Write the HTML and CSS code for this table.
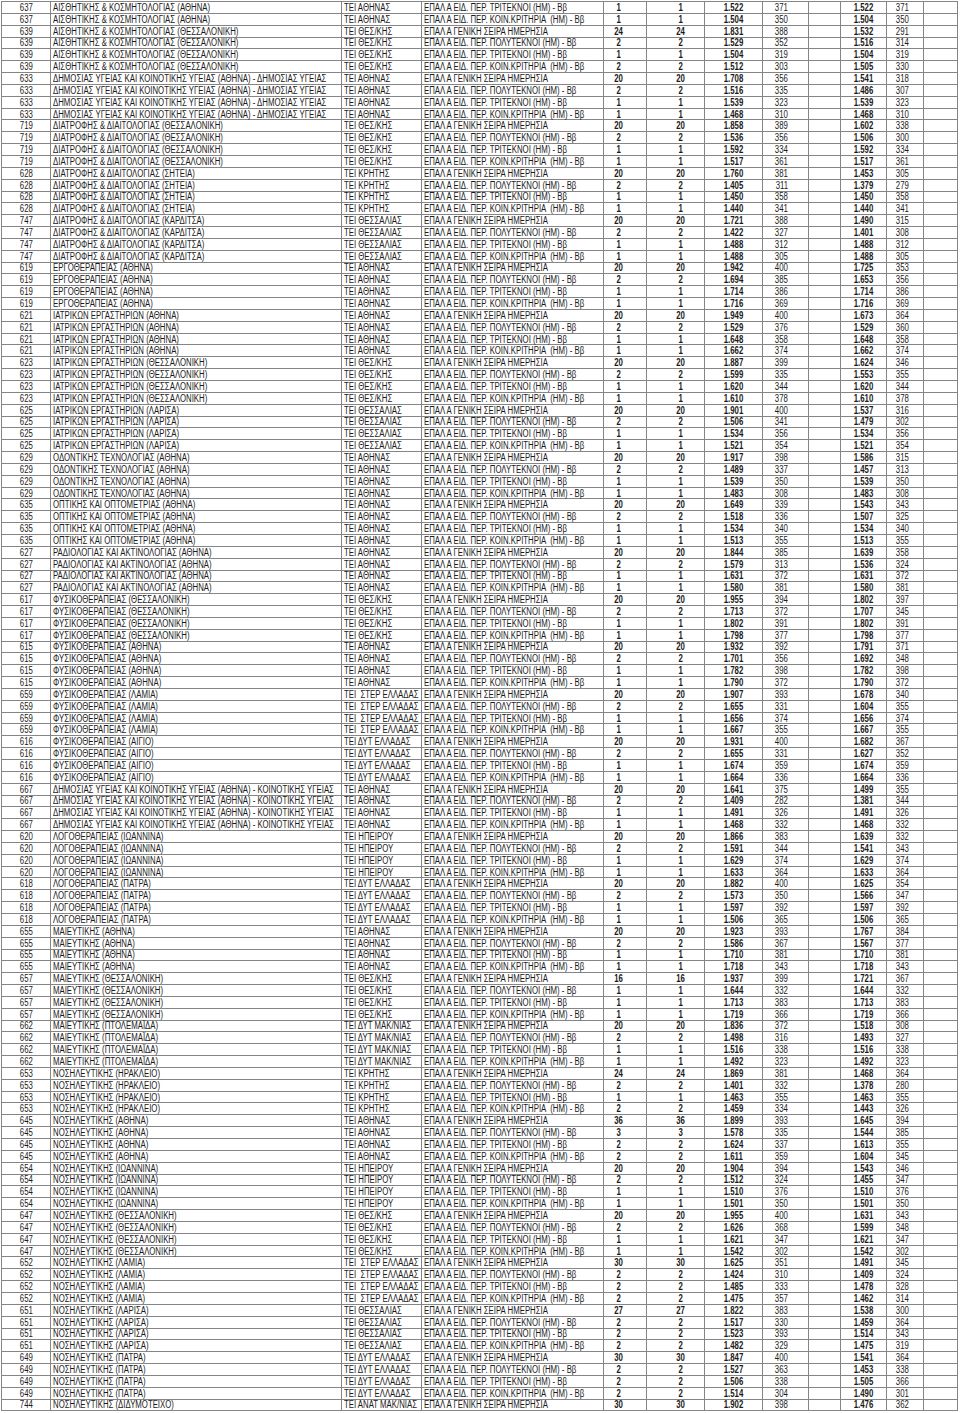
FILE: index.html
```html
<!DOCTYPE html>
<html lang="el">
<head>
<meta charset="utf-8">
<title>Βάσεις ΤΕΙ</title>
<link rel="stylesheet" href="styles.css">
</head>
<body>
<table class="sheet">
<colgroup><col class="w0"><col class="w1"><col class="w2"><col class="w3"><col class="w4"><col class="w5"><col class="w6"><col class="w7"><col class="w8"><col class="w9"><col class="w10"><col class="w11"></colgroup>
<tbody>
<tr><td><span>637</span></td><td><span>ΑΙΣΘΗΤΙΚΗΣ &amp; ΚΟΣΜΗΤΟΛΟΓΙΑΣ (ΑΘΗΝΑ)</span></td><td><span>ΤΕΙ ΑΘΗΝΑΣ</span></td><td><span>ΕΠΑΛ Α ΕΙΔ. ΠΕΡ. ΤΡΙΤΕΚΝΟΙ (ΗΜ) - Ββ</span></td><td><span>1</span></td><td><span>1</span></td><td><span>1.522</span></td><td><span>371</span></td><td></td><td><span>1.522</span></td><td><span>371</span></td><td></td></tr>
<tr><td><span>637</span></td><td><span>ΑΙΣΘΗΤΙΚΗΣ &amp; ΚΟΣΜΗΤΟΛΟΓΙΑΣ (ΑΘΗΝΑ)</span></td><td><span>ΤΕΙ ΑΘΗΝΑΣ</span></td><td><span>ΕΠΑΛ Α ΕΙΔ. ΠΕΡ. ΚΟΙΝ.ΚΡΙΤΗΡΙΑ  (ΗΜ) - Ββ</span></td><td><span>1</span></td><td><span>1</span></td><td><span>1.504</span></td><td><span>350</span></td><td></td><td><span>1.504</span></td><td><span>350</span></td><td></td></tr>
<tr><td><span>639</span></td><td><span>ΑΙΣΘΗΤΙΚΗΣ &amp; ΚΟΣΜΗΤΟΛΟΓΙΑΣ (ΘΕΣΣΑΛΟΝΙΚΗ)</span></td><td><span>ΤΕΙ ΘΕΣ/ΚΗΣ</span></td><td><span>ΕΠΑΛ Α ΓΕΝΙΚΗ ΣΕΙΡΑ ΗΜΕΡΗΣΙΑ</span></td><td><span>24</span></td><td><span>24</span></td><td><span>1.831</span></td><td><span>388</span></td><td></td><td><span>1.532</span></td><td><span>291</span></td><td></td></tr>
<tr><td><span>639</span></td><td><span>ΑΙΣΘΗΤΙΚΗΣ &amp; ΚΟΣΜΗΤΟΛΟΓΙΑΣ (ΘΕΣΣΑΛΟΝΙΚΗ)</span></td><td><span>ΤΕΙ ΘΕΣ/ΚΗΣ</span></td><td><span>ΕΠΑΛ Α ΕΙΔ. ΠΕΡ. ΠΟΛΥΤΕΚΝΟΙ (ΗΜ) - Ββ</span></td><td><span>2</span></td><td><span>2</span></td><td><span>1.529</span></td><td><span>352</span></td><td></td><td><span>1.516</span></td><td><span>314</span></td><td></td></tr>
<tr><td><span>639</span></td><td><span>ΑΙΣΘΗΤΙΚΗΣ &amp; ΚΟΣΜΗΤΟΛΟΓΙΑΣ (ΘΕΣΣΑΛΟΝΙΚΗ)</span></td><td><span>ΤΕΙ ΘΕΣ/ΚΗΣ</span></td><td><span>ΕΠΑΛ Α ΕΙΔ. ΠΕΡ. ΤΡΙΤΕΚΝΟΙ (ΗΜ) - Ββ</span></td><td><span>1</span></td><td><span>1</span></td><td><span>1.504</span></td><td><span>319</span></td><td></td><td><span>1.504</span></td><td><span>319</span></td><td></td></tr>
<tr><td><span>639</span></td><td><span>ΑΙΣΘΗΤΙΚΗΣ &amp; ΚΟΣΜΗΤΟΛΟΓΙΑΣ (ΘΕΣΣΑΛΟΝΙΚΗ)</span></td><td><span>ΤΕΙ ΘΕΣ/ΚΗΣ</span></td><td><span>ΕΠΑΛ Α ΕΙΔ. ΠΕΡ. ΚΟΙΝ.ΚΡΙΤΗΡΙΑ  (ΗΜ) - Ββ</span></td><td><span>2</span></td><td><span>2</span></td><td><span>1.512</span></td><td><span>303</span></td><td></td><td><span>1.505</span></td><td><span>330</span></td><td></td></tr>
<tr><td><span>633</span></td><td><span>ΔΗΜΟΣΙΑΣ ΥΓΕΙΑΣ ΚΑΙ ΚΟΙΝΟΤΙΚΗΣ ΥΓΕΙΑΣ (ΑΘΗΝΑ) - ΔΗΜΟΣΙΑΣ ΥΓΕΙΑΣ</span></td><td><span>ΤΕΙ ΑΘΗΝΑΣ</span></td><td><span>ΕΠΑΛ Α ΓΕΝΙΚΗ ΣΕΙΡΑ ΗΜΕΡΗΣΙΑ</span></td><td><span>20</span></td><td><span>20</span></td><td><span>1.708</span></td><td><span>356</span></td><td></td><td><span>1.541</span></td><td><span>318</span></td><td></td></tr>
<tr><td><span>633</span></td><td><span>ΔΗΜΟΣΙΑΣ ΥΓΕΙΑΣ ΚΑΙ ΚΟΙΝΟΤΙΚΗΣ ΥΓΕΙΑΣ (ΑΘΗΝΑ) - ΔΗΜΟΣΙΑΣ ΥΓΕΙΑΣ</span></td><td><span>ΤΕΙ ΑΘΗΝΑΣ</span></td><td><span>ΕΠΑΛ Α ΕΙΔ. ΠΕΡ. ΠΟΛΥΤΕΚΝΟΙ (ΗΜ) - Ββ</span></td><td><span>2</span></td><td><span>2</span></td><td><span>1.516</span></td><td><span>335</span></td><td></td><td><span>1.486</span></td><td><span>307</span></td><td></td></tr>
<tr><td><span>633</span></td><td><span>ΔΗΜΟΣΙΑΣ ΥΓΕΙΑΣ ΚΑΙ ΚΟΙΝΟΤΙΚΗΣ ΥΓΕΙΑΣ (ΑΘΗΝΑ) - ΔΗΜΟΣΙΑΣ ΥΓΕΙΑΣ</span></td><td><span>ΤΕΙ ΑΘΗΝΑΣ</span></td><td><span>ΕΠΑΛ Α ΕΙΔ. ΠΕΡ. ΤΡΙΤΕΚΝΟΙ (ΗΜ) - Ββ</span></td><td><span>1</span></td><td><span>1</span></td><td><span>1.539</span></td><td><span>323</span></td><td></td><td><span>1.539</span></td><td><span>323</span></td><td></td></tr>
<tr><td><span>633</span></td><td><span>ΔΗΜΟΣΙΑΣ ΥΓΕΙΑΣ ΚΑΙ ΚΟΙΝΟΤΙΚΗΣ ΥΓΕΙΑΣ (ΑΘΗΝΑ) - ΔΗΜΟΣΙΑΣ ΥΓΕΙΑΣ</span></td><td><span>ΤΕΙ ΑΘΗΝΑΣ</span></td><td><span>ΕΠΑΛ Α ΕΙΔ. ΠΕΡ. ΚΟΙΝ.ΚΡΙΤΗΡΙΑ  (ΗΜ) - Ββ</span></td><td><span>1</span></td><td><span>1</span></td><td><span>1.468</span></td><td><span>310</span></td><td></td><td><span>1.468</span></td><td><span>310</span></td><td></td></tr>
<tr><td><span>719</span></td><td><span>ΔΙΑΤΡΟΦΗΣ &amp; ΔΙΑΙΤΟΛΟΓΙΑΣ (ΘΕΣΣΑΛΟΝΙΚΗ)</span></td><td><span>ΤΕΙ ΘΕΣ/ΚΗΣ</span></td><td><span>ΕΠΑΛ Α ΓΕΝΙΚΗ ΣΕΙΡΑ ΗΜΕΡΗΣΙΑ</span></td><td><span>20</span></td><td><span>20</span></td><td><span>1.858</span></td><td><span>389</span></td><td></td><td><span>1.602</span></td><td><span>338</span></td><td></td></tr>
<tr><td><span>719</span></td><td><span>ΔΙΑΤΡΟΦΗΣ &amp; ΔΙΑΙΤΟΛΟΓΙΑΣ (ΘΕΣΣΑΛΟΝΙΚΗ)</span></td><td><span>ΤΕΙ ΘΕΣ/ΚΗΣ</span></td><td><span>ΕΠΑΛ Α ΕΙΔ. ΠΕΡ. ΠΟΛΥΤΕΚΝΟΙ (ΗΜ) - Ββ</span></td><td><span>2</span></td><td><span>2</span></td><td><span>1.536</span></td><td><span>356</span></td><td></td><td><span>1.506</span></td><td><span>300</span></td><td></td></tr>
<tr><td><span>719</span></td><td><span>ΔΙΑΤΡΟΦΗΣ &amp; ΔΙΑΙΤΟΛΟΓΙΑΣ (ΘΕΣΣΑΛΟΝΙΚΗ)</span></td><td><span>ΤΕΙ ΘΕΣ/ΚΗΣ</span></td><td><span>ΕΠΑΛ Α ΕΙΔ. ΠΕΡ. ΤΡΙΤΕΚΝΟΙ (ΗΜ) - Ββ</span></td><td><span>1</span></td><td><span>1</span></td><td><span>1.592</span></td><td><span>334</span></td><td></td><td><span>1.592</span></td><td><span>334</span></td><td></td></tr>
<tr><td><span>719</span></td><td><span>ΔΙΑΤΡΟΦΗΣ &amp; ΔΙΑΙΤΟΛΟΓΙΑΣ (ΘΕΣΣΑΛΟΝΙΚΗ)</span></td><td><span>ΤΕΙ ΘΕΣ/ΚΗΣ</span></td><td><span>ΕΠΑΛ Α ΕΙΔ. ΠΕΡ. ΚΟΙΝ.ΚΡΙΤΗΡΙΑ  (ΗΜ) - Ββ</span></td><td><span>1</span></td><td><span>1</span></td><td><span>1.517</span></td><td><span>361</span></td><td></td><td><span>1.517</span></td><td><span>361</span></td><td></td></tr>
<tr><td><span>628</span></td><td><span>ΔΙΑΤΡΟΦΗΣ &amp; ΔΙΑΙΤΟΛΟΓΙΑΣ (ΣΗΤΕΙΑ)</span></td><td><span>ΤΕΙ ΚΡΗΤΗΣ</span></td><td><span>ΕΠΑΛ Α ΓΕΝΙΚΗ ΣΕΙΡΑ ΗΜΕΡΗΣΙΑ</span></td><td><span>20</span></td><td><span>20</span></td><td><span>1.760</span></td><td><span>381</span></td><td></td><td><span>1.453</span></td><td><span>305</span></td><td></td></tr>
<tr><td><span>628</span></td><td><span>ΔΙΑΤΡΟΦΗΣ &amp; ΔΙΑΙΤΟΛΟΓΙΑΣ (ΣΗΤΕΙΑ)</span></td><td><span>ΤΕΙ ΚΡΗΤΗΣ</span></td><td><span>ΕΠΑΛ Α ΕΙΔ. ΠΕΡ. ΠΟΛΥΤΕΚΝΟΙ (ΗΜ) - Ββ</span></td><td><span>2</span></td><td><span>2</span></td><td><span>1.405</span></td><td><span>311</span></td><td></td><td><span>1.379</span></td><td><span>279</span></td><td></td></tr>
<tr><td><span>628</span></td><td><span>ΔΙΑΤΡΟΦΗΣ &amp; ΔΙΑΙΤΟΛΟΓΙΑΣ (ΣΗΤΕΙΑ)</span></td><td><span>ΤΕΙ ΚΡΗΤΗΣ</span></td><td><span>ΕΠΑΛ Α ΕΙΔ. ΠΕΡ. ΤΡΙΤΕΚΝΟΙ (ΗΜ) - Ββ</span></td><td><span>1</span></td><td><span>1</span></td><td><span>1.450</span></td><td><span>358</span></td><td></td><td><span>1.450</span></td><td><span>358</span></td><td></td></tr>
<tr><td><span>628</span></td><td><span>ΔΙΑΤΡΟΦΗΣ &amp; ΔΙΑΙΤΟΛΟΓΙΑΣ (ΣΗΤΕΙΑ)</span></td><td><span>ΤΕΙ ΚΡΗΤΗΣ</span></td><td><span>ΕΠΑΛ Α ΕΙΔ. ΠΕΡ. ΚΟΙΝ.ΚΡΙΤΗΡΙΑ  (ΗΜ) - Ββ</span></td><td><span>1</span></td><td><span>1</span></td><td><span>1.440</span></td><td><span>341</span></td><td></td><td><span>1.440</span></td><td><span>341</span></td><td></td></tr>
<tr><td><span>747</span></td><td><span>ΔΙΑΤΡΟΦΗΣ &amp; ΔΙΑΙΤΟΛΟΓΙΑΣ (ΚΑΡΔΙΤΣΑ)</span></td><td><span>ΤΕΙ ΘΕΣΣΑΛΙΑΣ</span></td><td><span>ΕΠΑΛ Α ΓΕΝΙΚΗ ΣΕΙΡΑ ΗΜΕΡΗΣΙΑ</span></td><td><span>20</span></td><td><span>20</span></td><td><span>1.721</span></td><td><span>388</span></td><td></td><td><span>1.490</span></td><td><span>315</span></td><td></td></tr>
<tr><td><span>747</span></td><td><span>ΔΙΑΤΡΟΦΗΣ &amp; ΔΙΑΙΤΟΛΟΓΙΑΣ (ΚΑΡΔΙΤΣΑ)</span></td><td><span>ΤΕΙ ΘΕΣΣΑΛΙΑΣ</span></td><td><span>ΕΠΑΛ Α ΕΙΔ. ΠΕΡ. ΠΟΛΥΤΕΚΝΟΙ (ΗΜ) - Ββ</span></td><td><span>2</span></td><td><span>2</span></td><td><span>1.422</span></td><td><span>327</span></td><td></td><td><span>1.401</span></td><td><span>308</span></td><td></td></tr>
<tr><td><span>747</span></td><td><span>ΔΙΑΤΡΟΦΗΣ &amp; ΔΙΑΙΤΟΛΟΓΙΑΣ (ΚΑΡΔΙΤΣΑ)</span></td><td><span>ΤΕΙ ΘΕΣΣΑΛΙΑΣ</span></td><td><span>ΕΠΑΛ Α ΕΙΔ. ΠΕΡ. ΤΡΙΤΕΚΝΟΙ (ΗΜ) - Ββ</span></td><td><span>1</span></td><td><span>1</span></td><td><span>1.488</span></td><td><span>312</span></td><td></td><td><span>1.488</span></td><td><span>312</span></td><td></td></tr>
<tr><td><span>747</span></td><td><span>ΔΙΑΤΡΟΦΗΣ &amp; ΔΙΑΙΤΟΛΟΓΙΑΣ (ΚΑΡΔΙΤΣΑ)</span></td><td><span>ΤΕΙ ΘΕΣΣΑΛΙΑΣ</span></td><td><span>ΕΠΑΛ Α ΕΙΔ. ΠΕΡ. ΚΟΙΝ.ΚΡΙΤΗΡΙΑ  (ΗΜ) - Ββ</span></td><td><span>1</span></td><td><span>1</span></td><td><span>1.488</span></td><td><span>305</span></td><td></td><td><span>1.488</span></td><td><span>305</span></td><td></td></tr>
<tr><td><span>619</span></td><td><span>ΕΡΓΟΘΕΡΑΠΕΙΑΣ (ΑΘΗΝΑ)</span></td><td><span>ΤΕΙ ΑΘΗΝΑΣ</span></td><td><span>ΕΠΑΛ Α ΓΕΝΙΚΗ ΣΕΙΡΑ ΗΜΕΡΗΣΙΑ</span></td><td><span>20</span></td><td><span>20</span></td><td><span>1.942</span></td><td><span>400</span></td><td></td><td><span>1.725</span></td><td><span>353</span></td><td></td></tr>
<tr><td><span>619</span></td><td><span>ΕΡΓΟΘΕΡΑΠΕΙΑΣ (ΑΘΗΝΑ)</span></td><td><span>ΤΕΙ ΑΘΗΝΑΣ</span></td><td><span>ΕΠΑΛ Α ΕΙΔ. ΠΕΡ. ΠΟΛΥΤΕΚΝΟΙ (ΗΜ) - Ββ</span></td><td><span>2</span></td><td><span>2</span></td><td><span>1.694</span></td><td><span>385</span></td><td></td><td><span>1.653</span></td><td><span>356</span></td><td></td></tr>
<tr><td><span>619</span></td><td><span>ΕΡΓΟΘΕΡΑΠΕΙΑΣ (ΑΘΗΝΑ)</span></td><td><span>ΤΕΙ ΑΘΗΝΑΣ</span></td><td><span>ΕΠΑΛ Α ΕΙΔ. ΠΕΡ. ΤΡΙΤΕΚΝΟΙ (ΗΜ) - Ββ</span></td><td><span>1</span></td><td><span>1</span></td><td><span>1.714</span></td><td><span>386</span></td><td></td><td><span>1.714</span></td><td><span>386</span></td><td></td></tr>
<tr><td><span>619</span></td><td><span>ΕΡΓΟΘΕΡΑΠΕΙΑΣ (ΑΘΗΝΑ)</span></td><td><span>ΤΕΙ ΑΘΗΝΑΣ</span></td><td><span>ΕΠΑΛ Α ΕΙΔ. ΠΕΡ. ΚΟΙΝ.ΚΡΙΤΗΡΙΑ  (ΗΜ) - Ββ</span></td><td><span>1</span></td><td><span>1</span></td><td><span>1.716</span></td><td><span>369</span></td><td></td><td><span>1.716</span></td><td><span>369</span></td><td></td></tr>
<tr><td><span>621</span></td><td><span>ΙΑΤΡΙΚΩΝ ΕΡΓΑΣΤΗΡΙΩΝ (ΑΘΗΝΑ)</span></td><td><span>ΤΕΙ ΑΘΗΝΑΣ</span></td><td><span>ΕΠΑΛ Α ΓΕΝΙΚΗ ΣΕΙΡΑ ΗΜΕΡΗΣΙΑ</span></td><td><span>20</span></td><td><span>20</span></td><td><span>1.949</span></td><td><span>400</span></td><td></td><td><span>1.673</span></td><td><span>364</span></td><td></td></tr>
<tr><td><span>621</span></td><td><span>ΙΑΤΡΙΚΩΝ ΕΡΓΑΣΤΗΡΙΩΝ (ΑΘΗΝΑ)</span></td><td><span>ΤΕΙ ΑΘΗΝΑΣ</span></td><td><span>ΕΠΑΛ Α ΕΙΔ. ΠΕΡ. ΠΟΛΥΤΕΚΝΟΙ (ΗΜ) - Ββ</span></td><td><span>2</span></td><td><span>2</span></td><td><span>1.529</span></td><td><span>376</span></td><td></td><td><span>1.529</span></td><td><span>360</span></td><td></td></tr>
<tr><td><span>621</span></td><td><span>ΙΑΤΡΙΚΩΝ ΕΡΓΑΣΤΗΡΙΩΝ (ΑΘΗΝΑ)</span></td><td><span>ΤΕΙ ΑΘΗΝΑΣ</span></td><td><span>ΕΠΑΛ Α ΕΙΔ. ΠΕΡ. ΤΡΙΤΕΚΝΟΙ (ΗΜ) - Ββ</span></td><td><span>1</span></td><td><span>1</span></td><td><span>1.648</span></td><td><span>358</span></td><td></td><td><span>1.648</span></td><td><span>358</span></td><td></td></tr>
<tr><td><span>621</span></td><td><span>ΙΑΤΡΙΚΩΝ ΕΡΓΑΣΤΗΡΙΩΝ (ΑΘΗΝΑ)</span></td><td><span>ΤΕΙ ΑΘΗΝΑΣ</span></td><td><span>ΕΠΑΛ Α ΕΙΔ. ΠΕΡ. ΚΟΙΝ.ΚΡΙΤΗΡΙΑ  (ΗΜ) - Ββ</span></td><td><span>1</span></td><td><span>1</span></td><td><span>1.662</span></td><td><span>374</span></td><td></td><td><span>1.662</span></td><td><span>374</span></td><td></td></tr>
<tr><td><span>623</span></td><td><span>ΙΑΤΡΙΚΩΝ ΕΡΓΑΣΤΗΡΙΩΝ (ΘΕΣΣΑΛΟΝΙΚΗ)</span></td><td><span>ΤΕΙ ΘΕΣ/ΚΗΣ</span></td><td><span>ΕΠΑΛ Α ΓΕΝΙΚΗ ΣΕΙΡΑ ΗΜΕΡΗΣΙΑ</span></td><td><span>20</span></td><td><span>20</span></td><td><span>1.887</span></td><td><span>399</span></td><td></td><td><span>1.624</span></td><td><span>346</span></td><td></td></tr>
<tr><td><span>623</span></td><td><span>ΙΑΤΡΙΚΩΝ ΕΡΓΑΣΤΗΡΙΩΝ (ΘΕΣΣΑΛΟΝΙΚΗ)</span></td><td><span>ΤΕΙ ΘΕΣ/ΚΗΣ</span></td><td><span>ΕΠΑΛ Α ΕΙΔ. ΠΕΡ. ΠΟΛΥΤΕΚΝΟΙ (ΗΜ) - Ββ</span></td><td><span>2</span></td><td><span>2</span></td><td><span>1.599</span></td><td><span>335</span></td><td></td><td><span>1.553</span></td><td><span>355</span></td><td></td></tr>
<tr><td><span>623</span></td><td><span>ΙΑΤΡΙΚΩΝ ΕΡΓΑΣΤΗΡΙΩΝ (ΘΕΣΣΑΛΟΝΙΚΗ)</span></td><td><span>ΤΕΙ ΘΕΣ/ΚΗΣ</span></td><td><span>ΕΠΑΛ Α ΕΙΔ. ΠΕΡ. ΤΡΙΤΕΚΝΟΙ (ΗΜ) - Ββ</span></td><td><span>1</span></td><td><span>1</span></td><td><span>1.620</span></td><td><span>344</span></td><td></td><td><span>1.620</span></td><td><span>344</span></td><td></td></tr>
<tr><td><span>623</span></td><td><span>ΙΑΤΡΙΚΩΝ ΕΡΓΑΣΤΗΡΙΩΝ (ΘΕΣΣΑΛΟΝΙΚΗ)</span></td><td><span>ΤΕΙ ΘΕΣ/ΚΗΣ</span></td><td><span>ΕΠΑΛ Α ΕΙΔ. ΠΕΡ. ΚΟΙΝ.ΚΡΙΤΗΡΙΑ  (ΗΜ) - Ββ</span></td><td><span>1</span></td><td><span>1</span></td><td><span>1.610</span></td><td><span>378</span></td><td></td><td><span>1.610</span></td><td><span>378</span></td><td></td></tr>
<tr><td><span>625</span></td><td><span>ΙΑΤΡΙΚΩΝ ΕΡΓΑΣΤΗΡΙΩΝ (ΛΑΡΙΣΑ)</span></td><td><span>ΤΕΙ ΘΕΣΣΑΛΙΑΣ</span></td><td><span>ΕΠΑΛ Α ΓΕΝΙΚΗ ΣΕΙΡΑ ΗΜΕΡΗΣΙΑ</span></td><td><span>20</span></td><td><span>20</span></td><td><span>1.901</span></td><td><span>400</span></td><td></td><td><span>1.537</span></td><td><span>316</span></td><td></td></tr>
<tr><td><span>625</span></td><td><span>ΙΑΤΡΙΚΩΝ ΕΡΓΑΣΤΗΡΙΩΝ (ΛΑΡΙΣΑ)</span></td><td><span>ΤΕΙ ΘΕΣΣΑΛΙΑΣ</span></td><td><span>ΕΠΑΛ Α ΕΙΔ. ΠΕΡ. ΠΟΛΥΤΕΚΝΟΙ (ΗΜ) - Ββ</span></td><td><span>2</span></td><td><span>2</span></td><td><span>1.506</span></td><td><span>341</span></td><td></td><td><span>1.479</span></td><td><span>302</span></td><td></td></tr>
<tr><td><span>625</span></td><td><span>ΙΑΤΡΙΚΩΝ ΕΡΓΑΣΤΗΡΙΩΝ (ΛΑΡΙΣΑ)</span></td><td><span>ΤΕΙ ΘΕΣΣΑΛΙΑΣ</span></td><td><span>ΕΠΑΛ Α ΕΙΔ. ΠΕΡ. ΤΡΙΤΕΚΝΟΙ (ΗΜ) - Ββ</span></td><td><span>1</span></td><td><span>1</span></td><td><span>1.534</span></td><td><span>356</span></td><td></td><td><span>1.534</span></td><td><span>356</span></td><td></td></tr>
<tr><td><span>625</span></td><td><span>ΙΑΤΡΙΚΩΝ ΕΡΓΑΣΤΗΡΙΩΝ (ΛΑΡΙΣΑ)</span></td><td><span>ΤΕΙ ΘΕΣΣΑΛΙΑΣ</span></td><td><span>ΕΠΑΛ Α ΕΙΔ. ΠΕΡ. ΚΟΙΝ.ΚΡΙΤΗΡΙΑ  (ΗΜ) - Ββ</span></td><td><span>1</span></td><td><span>1</span></td><td><span>1.521</span></td><td><span>354</span></td><td></td><td><span>1.521</span></td><td><span>354</span></td><td></td></tr>
<tr><td><span>629</span></td><td><span>ΟΔΟΝΤΙΚΗΣ ΤΕΧΝΟΛΟΓΙΑΣ (ΑΘΗΝΑ)</span></td><td><span>ΤΕΙ ΑΘΗΝΑΣ</span></td><td><span>ΕΠΑΛ Α ΓΕΝΙΚΗ ΣΕΙΡΑ ΗΜΕΡΗΣΙΑ</span></td><td><span>20</span></td><td><span>20</span></td><td><span>1.917</span></td><td><span>398</span></td><td></td><td><span>1.586</span></td><td><span>315</span></td><td></td></tr>
<tr><td><span>629</span></td><td><span>ΟΔΟΝΤΙΚΗΣ ΤΕΧΝΟΛΟΓΙΑΣ (ΑΘΗΝΑ)</span></td><td><span>ΤΕΙ ΑΘΗΝΑΣ</span></td><td><span>ΕΠΑΛ Α ΕΙΔ. ΠΕΡ. ΠΟΛΥΤΕΚΝΟΙ (ΗΜ) - Ββ</span></td><td><span>2</span></td><td><span>2</span></td><td><span>1.489</span></td><td><span>337</span></td><td></td><td><span>1.457</span></td><td><span>313</span></td><td></td></tr>
<tr><td><span>629</span></td><td><span>ΟΔΟΝΤΙΚΗΣ ΤΕΧΝΟΛΟΓΙΑΣ (ΑΘΗΝΑ)</span></td><td><span>ΤΕΙ ΑΘΗΝΑΣ</span></td><td><span>ΕΠΑΛ Α ΕΙΔ. ΠΕΡ. ΤΡΙΤΕΚΝΟΙ (ΗΜ) - Ββ</span></td><td><span>1</span></td><td><span>1</span></td><td><span>1.539</span></td><td><span>350</span></td><td></td><td><span>1.539</span></td><td><span>350</span></td><td></td></tr>
<tr><td><span>629</span></td><td><span>ΟΔΟΝΤΙΚΗΣ ΤΕΧΝΟΛΟΓΙΑΣ (ΑΘΗΝΑ)</span></td><td><span>ΤΕΙ ΑΘΗΝΑΣ</span></td><td><span>ΕΠΑΛ Α ΕΙΔ. ΠΕΡ. ΚΟΙΝ.ΚΡΙΤΗΡΙΑ  (ΗΜ) - Ββ</span></td><td><span>1</span></td><td><span>1</span></td><td><span>1.483</span></td><td><span>308</span></td><td></td><td><span>1.483</span></td><td><span>308</span></td><td></td></tr>
<tr><td><span>635</span></td><td><span>ΟΠΤΙΚΗΣ ΚΑΙ ΟΠΤΟΜΕΤΡΙΑΣ (ΑΘΗΝΑ)</span></td><td><span>ΤΕΙ ΑΘΗΝΑΣ</span></td><td><span>ΕΠΑΛ Α ΓΕΝΙΚΗ ΣΕΙΡΑ ΗΜΕΡΗΣΙΑ</span></td><td><span>20</span></td><td><span>20</span></td><td><span>1.649</span></td><td><span>339</span></td><td></td><td><span>1.543</span></td><td><span>343</span></td><td></td></tr>
<tr><td><span>635</span></td><td><span>ΟΠΤΙΚΗΣ ΚΑΙ ΟΠΤΟΜΕΤΡΙΑΣ (ΑΘΗΝΑ)</span></td><td><span>ΤΕΙ ΑΘΗΝΑΣ</span></td><td><span>ΕΠΑΛ Α ΕΙΔ. ΠΕΡ. ΠΟΛΥΤΕΚΝΟΙ (ΗΜ) - Ββ</span></td><td><span>2</span></td><td><span>2</span></td><td><span>1.518</span></td><td><span>336</span></td><td></td><td><span>1.507</span></td><td><span>325</span></td><td></td></tr>
<tr><td><span>635</span></td><td><span>ΟΠΤΙΚΗΣ ΚΑΙ ΟΠΤΟΜΕΤΡΙΑΣ (ΑΘΗΝΑ)</span></td><td><span>ΤΕΙ ΑΘΗΝΑΣ</span></td><td><span>ΕΠΑΛ Α ΕΙΔ. ΠΕΡ. ΤΡΙΤΕΚΝΟΙ (ΗΜ) - Ββ</span></td><td><span>1</span></td><td><span>1</span></td><td><span>1.534</span></td><td><span>340</span></td><td></td><td><span>1.534</span></td><td><span>340</span></td><td></td></tr>
<tr><td><span>635</span></td><td><span>ΟΠΤΙΚΗΣ ΚΑΙ ΟΠΤΟΜΕΤΡΙΑΣ (ΑΘΗΝΑ)</span></td><td><span>ΤΕΙ ΑΘΗΝΑΣ</span></td><td><span>ΕΠΑΛ Α ΕΙΔ. ΠΕΡ. ΚΟΙΝ.ΚΡΙΤΗΡΙΑ  (ΗΜ) - Ββ</span></td><td><span>1</span></td><td><span>1</span></td><td><span>1.513</span></td><td><span>355</span></td><td></td><td><span>1.513</span></td><td><span>355</span></td><td></td></tr>
<tr><td><span>627</span></td><td><span>ΡΑΔΙΟΛΟΓΙΑΣ ΚΑΙ ΑΚΤΙΝΟΛΟΓΙΑΣ (ΑΘΗΝΑ)</span></td><td><span>ΤΕΙ ΑΘΗΝΑΣ</span></td><td><span>ΕΠΑΛ Α ΓΕΝΙΚΗ ΣΕΙΡΑ ΗΜΕΡΗΣΙΑ</span></td><td><span>20</span></td><td><span>20</span></td><td><span>1.844</span></td><td><span>385</span></td><td></td><td><span>1.639</span></td><td><span>358</span></td><td></td></tr>
<tr><td><span>627</span></td><td><span>ΡΑΔΙΟΛΟΓΙΑΣ ΚΑΙ ΑΚΤΙΝΟΛΟΓΙΑΣ (ΑΘΗΝΑ)</span></td><td><span>ΤΕΙ ΑΘΗΝΑΣ</span></td><td><span>ΕΠΑΛ Α ΕΙΔ. ΠΕΡ. ΠΟΛΥΤΕΚΝΟΙ (ΗΜ) - Ββ</span></td><td><span>2</span></td><td><span>2</span></td><td><span>1.579</span></td><td><span>313</span></td><td></td><td><span>1.536</span></td><td><span>324</span></td><td></td></tr>
<tr><td><span>627</span></td><td><span>ΡΑΔΙΟΛΟΓΙΑΣ ΚΑΙ ΑΚΤΙΝΟΛΟΓΙΑΣ (ΑΘΗΝΑ)</span></td><td><span>ΤΕΙ ΑΘΗΝΑΣ</span></td><td><span>ΕΠΑΛ Α ΕΙΔ. ΠΕΡ. ΤΡΙΤΕΚΝΟΙ (ΗΜ) - Ββ</span></td><td><span>1</span></td><td><span>1</span></td><td><span>1.631</span></td><td><span>372</span></td><td></td><td><span>1.631</span></td><td><span>372</span></td><td></td></tr>
<tr><td><span>627</span></td><td><span>ΡΑΔΙΟΛΟΓΙΑΣ ΚΑΙ ΑΚΤΙΝΟΛΟΓΙΑΣ (ΑΘΗΝΑ)</span></td><td><span>ΤΕΙ ΑΘΗΝΑΣ</span></td><td><span>ΕΠΑΛ Α ΕΙΔ. ΠΕΡ. ΚΟΙΝ.ΚΡΙΤΗΡΙΑ  (ΗΜ) - Ββ</span></td><td><span>1</span></td><td><span>1</span></td><td><span>1.580</span></td><td><span>381</span></td><td></td><td><span>1.580</span></td><td><span>381</span></td><td></td></tr>
<tr><td><span>617</span></td><td><span>ΦΥΣΙΚΟΘΕΡΑΠΕΙΑΣ (ΘΕΣΣΑΛΟΝΙΚΗ)</span></td><td><span>ΤΕΙ ΘΕΣ/ΚΗΣ</span></td><td><span>ΕΠΑΛ Α ΓΕΝΙΚΗ ΣΕΙΡΑ ΗΜΕΡΗΣΙΑ</span></td><td><span>20</span></td><td><span>20</span></td><td><span>1.955</span></td><td><span>394</span></td><td></td><td><span>1.802</span></td><td><span>397</span></td><td></td></tr>
<tr><td><span>617</span></td><td><span>ΦΥΣΙΚΟΘΕΡΑΠΕΙΑΣ (ΘΕΣΣΑΛΟΝΙΚΗ)</span></td><td><span>ΤΕΙ ΘΕΣ/ΚΗΣ</span></td><td><span>ΕΠΑΛ Α ΕΙΔ. ΠΕΡ. ΠΟΛΥΤΕΚΝΟΙ (ΗΜ) - Ββ</span></td><td><span>2</span></td><td><span>2</span></td><td><span>1.713</span></td><td><span>372</span></td><td></td><td><span>1.707</span></td><td><span>345</span></td><td></td></tr>
<tr><td><span>617</span></td><td><span>ΦΥΣΙΚΟΘΕΡΑΠΕΙΑΣ (ΘΕΣΣΑΛΟΝΙΚΗ)</span></td><td><span>ΤΕΙ ΘΕΣ/ΚΗΣ</span></td><td><span>ΕΠΑΛ Α ΕΙΔ. ΠΕΡ. ΤΡΙΤΕΚΝΟΙ (ΗΜ) - Ββ</span></td><td><span>1</span></td><td><span>1</span></td><td><span>1.802</span></td><td><span>391</span></td><td></td><td><span>1.802</span></td><td><span>391</span></td><td></td></tr>
<tr><td><span>617</span></td><td><span>ΦΥΣΙΚΟΘΕΡΑΠΕΙΑΣ (ΘΕΣΣΑΛΟΝΙΚΗ)</span></td><td><span>ΤΕΙ ΘΕΣ/ΚΗΣ</span></td><td><span>ΕΠΑΛ Α ΕΙΔ. ΠΕΡ. ΚΟΙΝ.ΚΡΙΤΗΡΙΑ  (ΗΜ) - Ββ</span></td><td><span>1</span></td><td><span>1</span></td><td><span>1.798</span></td><td><span>377</span></td><td></td><td><span>1.798</span></td><td><span>377</span></td><td></td></tr>
<tr><td><span>615</span></td><td><span>ΦΥΣΙΚΟΘΕΡΑΠΕΙΑΣ (ΑΘΗΝΑ)</span></td><td><span>ΤΕΙ ΑΘΗΝΑΣ</span></td><td><span>ΕΠΑΛ Α ΓΕΝΙΚΗ ΣΕΙΡΑ ΗΜΕΡΗΣΙΑ</span></td><td><span>20</span></td><td><span>20</span></td><td><span>1.932</span></td><td><span>392</span></td><td></td><td><span>1.791</span></td><td><span>371</span></td><td></td></tr>
<tr><td><span>615</span></td><td><span>ΦΥΣΙΚΟΘΕΡΑΠΕΙΑΣ (ΑΘΗΝΑ)</span></td><td><span>ΤΕΙ ΑΘΗΝΑΣ</span></td><td><span>ΕΠΑΛ Α ΕΙΔ. ΠΕΡ. ΠΟΛΥΤΕΚΝΟΙ (ΗΜ) - Ββ</span></td><td><span>2</span></td><td><span>2</span></td><td><span>1.701</span></td><td><span>356</span></td><td></td><td><span>1.692</span></td><td><span>348</span></td><td></td></tr>
<tr><td><span>615</span></td><td><span>ΦΥΣΙΚΟΘΕΡΑΠΕΙΑΣ (ΑΘΗΝΑ)</span></td><td><span>ΤΕΙ ΑΘΗΝΑΣ</span></td><td><span>ΕΠΑΛ Α ΕΙΔ. ΠΕΡ. ΤΡΙΤΕΚΝΟΙ (ΗΜ) - Ββ</span></td><td><span>1</span></td><td><span>1</span></td><td><span>1.782</span></td><td><span>398</span></td><td></td><td><span>1.782</span></td><td><span>398</span></td><td></td></tr>
<tr><td><span>615</span></td><td><span>ΦΥΣΙΚΟΘΕΡΑΠΕΙΑΣ (ΑΘΗΝΑ)</span></td><td><span>ΤΕΙ ΑΘΗΝΑΣ</span></td><td><span>ΕΠΑΛ Α ΕΙΔ. ΠΕΡ. ΚΟΙΝ.ΚΡΙΤΗΡΙΑ  (ΗΜ) - Ββ</span></td><td><span>1</span></td><td><span>1</span></td><td><span>1.790</span></td><td><span>372</span></td><td></td><td><span>1.790</span></td><td><span>372</span></td><td></td></tr>
<tr><td><span>659</span></td><td><span>ΦΥΣΙΚΟΘΕΡΑΠΕΙΑΣ (ΛΑΜΙΑ)</span></td><td><span>ΤΕΙ  ΣΤΕΡ ΕΛΛΑΔΑΣ</span></td><td><span>ΕΠΑΛ Α ΓΕΝΙΚΗ ΣΕΙΡΑ ΗΜΕΡΗΣΙΑ</span></td><td><span>20</span></td><td><span>20</span></td><td><span>1.907</span></td><td><span>393</span></td><td></td><td><span>1.678</span></td><td><span>340</span></td><td></td></tr>
<tr><td><span>659</span></td><td><span>ΦΥΣΙΚΟΘΕΡΑΠΕΙΑΣ (ΛΑΜΙΑ)</span></td><td><span>ΤΕΙ  ΣΤΕΡ ΕΛΛΑΔΑΣ</span></td><td><span>ΕΠΑΛ Α ΕΙΔ. ΠΕΡ. ΠΟΛΥΤΕΚΝΟΙ (ΗΜ) - Ββ</span></td><td><span>2</span></td><td><span>2</span></td><td><span>1.655</span></td><td><span>331</span></td><td></td><td><span>1.604</span></td><td><span>355</span></td><td></td></tr>
<tr><td><span>659</span></td><td><span>ΦΥΣΙΚΟΘΕΡΑΠΕΙΑΣ (ΛΑΜΙΑ)</span></td><td><span>ΤΕΙ  ΣΤΕΡ ΕΛΛΑΔΑΣ</span></td><td><span>ΕΠΑΛ Α ΕΙΔ. ΠΕΡ. ΤΡΙΤΕΚΝΟΙ (ΗΜ) - Ββ</span></td><td><span>1</span></td><td><span>1</span></td><td><span>1.656</span></td><td><span>374</span></td><td></td><td><span>1.656</span></td><td><span>374</span></td><td></td></tr>
<tr><td><span>659</span></td><td><span>ΦΥΣΙΚΟΘΕΡΑΠΕΙΑΣ (ΛΑΜΙΑ)</span></td><td><span>ΤΕΙ  ΣΤΕΡ ΕΛΛΑΔΑΣ</span></td><td><span>ΕΠΑΛ Α ΕΙΔ. ΠΕΡ. ΚΟΙΝ.ΚΡΙΤΗΡΙΑ  (ΗΜ) - Ββ</span></td><td><span>1</span></td><td><span>1</span></td><td><span>1.667</span></td><td><span>355</span></td><td></td><td><span>1.667</span></td><td><span>355</span></td><td></td></tr>
<tr><td><span>616</span></td><td><span>ΦΥΣΙΚΟΘΕΡΑΠΕΙΑΣ (ΑΙΓΙΟ)</span></td><td><span>ΤΕΙ ΔΥΤ ΕΛΛΑΔΑΣ</span></td><td><span>ΕΠΑΛ Α ΓΕΝΙΚΗ ΣΕΙΡΑ ΗΜΕΡΗΣΙΑ</span></td><td><span>20</span></td><td><span>20</span></td><td><span>1.931</span></td><td><span>400</span></td><td></td><td><span>1.682</span></td><td><span>367</span></td><td></td></tr>
<tr><td><span>616</span></td><td><span>ΦΥΣΙΚΟΘΕΡΑΠΕΙΑΣ (ΑΙΓΙΟ)</span></td><td><span>ΤΕΙ ΔΥΤ ΕΛΛΑΔΑΣ</span></td><td><span>ΕΠΑΛ Α ΕΙΔ. ΠΕΡ. ΠΟΛΥΤΕΚΝΟΙ (ΗΜ) - Ββ</span></td><td><span>2</span></td><td><span>2</span></td><td><span>1.655</span></td><td><span>331</span></td><td></td><td><span>1.627</span></td><td><span>352</span></td><td></td></tr>
<tr><td><span>616</span></td><td><span>ΦΥΣΙΚΟΘΕΡΑΠΕΙΑΣ (ΑΙΓΙΟ)</span></td><td><span>ΤΕΙ ΔΥΤ ΕΛΛΑΔΑΣ</span></td><td><span>ΕΠΑΛ Α ΕΙΔ. ΠΕΡ. ΤΡΙΤΕΚΝΟΙ (ΗΜ) - Ββ</span></td><td><span>1</span></td><td><span>1</span></td><td><span>1.674</span></td><td><span>359</span></td><td></td><td><span>1.674</span></td><td><span>359</span></td><td></td></tr>
<tr><td><span>616</span></td><td><span>ΦΥΣΙΚΟΘΕΡΑΠΕΙΑΣ (ΑΙΓΙΟ)</span></td><td><span>ΤΕΙ ΔΥΤ ΕΛΛΑΔΑΣ</span></td><td><span>ΕΠΑΛ Α ΕΙΔ. ΠΕΡ. ΚΟΙΝ.ΚΡΙΤΗΡΙΑ  (ΗΜ) - Ββ</span></td><td><span>1</span></td><td><span>1</span></td><td><span>1.664</span></td><td><span>336</span></td><td></td><td><span>1.664</span></td><td><span>336</span></td><td></td></tr>
<tr><td><span>667</span></td><td><span>ΔΗΜΟΣΙΑΣ ΥΓΕΙΑΣ ΚΑΙ ΚΟΙΝΟΤΙΚΗΣ ΥΓΕΙΑΣ (ΑΘΗΝΑ) - ΚΟΙΝΟΤΙΚΗΣ ΥΓΕΙΑΣ</span></td><td><span>ΤΕΙ ΑΘΗΝΑΣ</span></td><td><span>ΕΠΑΛ Α ΓΕΝΙΚΗ ΣΕΙΡΑ ΗΜΕΡΗΣΙΑ</span></td><td><span>20</span></td><td><span>20</span></td><td><span>1.641</span></td><td><span>375</span></td><td></td><td><span>1.499</span></td><td><span>355</span></td><td></td></tr>
<tr><td><span>667</span></td><td><span>ΔΗΜΟΣΙΑΣ ΥΓΕΙΑΣ ΚΑΙ ΚΟΙΝΟΤΙΚΗΣ ΥΓΕΙΑΣ (ΑΘΗΝΑ) - ΚΟΙΝΟΤΙΚΗΣ ΥΓΕΙΑΣ</span></td><td><span>ΤΕΙ ΑΘΗΝΑΣ</span></td><td><span>ΕΠΑΛ Α ΕΙΔ. ΠΕΡ. ΠΟΛΥΤΕΚΝΟΙ (ΗΜ) - Ββ</span></td><td><span>2</span></td><td><span>2</span></td><td><span>1.409</span></td><td><span>282</span></td><td></td><td><span>1.381</span></td><td><span>344</span></td><td></td></tr>
<tr><td><span>667</span></td><td><span>ΔΗΜΟΣΙΑΣ ΥΓΕΙΑΣ ΚΑΙ ΚΟΙΝΟΤΙΚΗΣ ΥΓΕΙΑΣ (ΑΘΗΝΑ) - ΚΟΙΝΟΤΙΚΗΣ ΥΓΕΙΑΣ</span></td><td><span>ΤΕΙ ΑΘΗΝΑΣ</span></td><td><span>ΕΠΑΛ Α ΕΙΔ. ΠΕΡ. ΤΡΙΤΕΚΝΟΙ (ΗΜ) - Ββ</span></td><td><span>1</span></td><td><span>1</span></td><td><span>1.491</span></td><td><span>326</span></td><td></td><td><span>1.491</span></td><td><span>326</span></td><td></td></tr>
<tr><td><span>667</span></td><td><span>ΔΗΜΟΣΙΑΣ ΥΓΕΙΑΣ ΚΑΙ ΚΟΙΝΟΤΙΚΗΣ ΥΓΕΙΑΣ (ΑΘΗΝΑ) - ΚΟΙΝΟΤΙΚΗΣ ΥΓΕΙΑΣ</span></td><td><span>ΤΕΙ ΑΘΗΝΑΣ</span></td><td><span>ΕΠΑΛ Α ΕΙΔ. ΠΕΡ. ΚΟΙΝ.ΚΡΙΤΗΡΙΑ  (ΗΜ) - Ββ</span></td><td><span>1</span></td><td><span>1</span></td><td><span>1.468</span></td><td><span>332</span></td><td></td><td><span>1.468</span></td><td><span>332</span></td><td></td></tr>
<tr><td><span>620</span></td><td><span>ΛΟΓΟΘΕΡΑΠΕΙΑΣ (ΙΩΑΝΝΙΝΑ)</span></td><td><span>ΤΕΙ ΗΠΕΙΡΟΥ</span></td><td><span>ΕΠΑΛ Α ΓΕΝΙΚΗ ΣΕΙΡΑ ΗΜΕΡΗΣΙΑ</span></td><td><span>20</span></td><td><span>20</span></td><td><span>1.866</span></td><td><span>383</span></td><td></td><td><span>1.639</span></td><td><span>332</span></td><td></td></tr>
<tr><td><span>620</span></td><td><span>ΛΟΓΟΘΕΡΑΠΕΙΑΣ (ΙΩΑΝΝΙΝΑ)</span></td><td><span>ΤΕΙ ΗΠΕΙΡΟΥ</span></td><td><span>ΕΠΑΛ Α ΕΙΔ. ΠΕΡ. ΠΟΛΥΤΕΚΝΟΙ (ΗΜ) - Ββ</span></td><td><span>2</span></td><td><span>2</span></td><td><span>1.591</span></td><td><span>344</span></td><td></td><td><span>1.541</span></td><td><span>343</span></td><td></td></tr>
<tr><td><span>620</span></td><td><span>ΛΟΓΟΘΕΡΑΠΕΙΑΣ (ΙΩΑΝΝΙΝΑ)</span></td><td><span>ΤΕΙ ΗΠΕΙΡΟΥ</span></td><td><span>ΕΠΑΛ Α ΕΙΔ. ΠΕΡ. ΤΡΙΤΕΚΝΟΙ (ΗΜ) - Ββ</span></td><td><span>1</span></td><td><span>1</span></td><td><span>1.629</span></td><td><span>374</span></td><td></td><td><span>1.629</span></td><td><span>374</span></td><td></td></tr>
<tr><td><span>620</span></td><td><span>ΛΟΓΟΘΕΡΑΠΕΙΑΣ (ΙΩΑΝΝΙΝΑ)</span></td><td><span>ΤΕΙ ΗΠΕΙΡΟΥ</span></td><td><span>ΕΠΑΛ Α ΕΙΔ. ΠΕΡ. ΚΟΙΝ.ΚΡΙΤΗΡΙΑ  (ΗΜ) - Ββ</span></td><td><span>1</span></td><td><span>1</span></td><td><span>1.633</span></td><td><span>364</span></td><td></td><td><span>1.633</span></td><td><span>364</span></td><td></td></tr>
<tr><td><span>618</span></td><td><span>ΛΟΓΟΘΕΡΑΠΕΙΑΣ (ΠΑΤΡΑ)</span></td><td><span>ΤΕΙ ΔΥΤ ΕΛΛΑΔΑΣ</span></td><td><span>ΕΠΑΛ Α ΓΕΝΙΚΗ ΣΕΙΡΑ ΗΜΕΡΗΣΙΑ</span></td><td><span>20</span></td><td><span>20</span></td><td><span>1.882</span></td><td><span>400</span></td><td></td><td><span>1.625</span></td><td><span>354</span></td><td></td></tr>
<tr><td><span>618</span></td><td><span>ΛΟΓΟΘΕΡΑΠΕΙΑΣ (ΠΑΤΡΑ)</span></td><td><span>ΤΕΙ ΔΥΤ ΕΛΛΑΔΑΣ</span></td><td><span>ΕΠΑΛ Α ΕΙΔ. ΠΕΡ. ΠΟΛΥΤΕΚΝΟΙ (ΗΜ) - Ββ</span></td><td><span>2</span></td><td><span>2</span></td><td><span>1.573</span></td><td><span>350</span></td><td></td><td><span>1.566</span></td><td><span>347</span></td><td></td></tr>
<tr><td><span>618</span></td><td><span>ΛΟΓΟΘΕΡΑΠΕΙΑΣ (ΠΑΤΡΑ)</span></td><td><span>ΤΕΙ ΔΥΤ ΕΛΛΑΔΑΣ</span></td><td><span>ΕΠΑΛ Α ΕΙΔ. ΠΕΡ. ΤΡΙΤΕΚΝΟΙ (ΗΜ) - Ββ</span></td><td><span>1</span></td><td><span>1</span></td><td><span>1.597</span></td><td><span>392</span></td><td></td><td><span>1.597</span></td><td><span>392</span></td><td></td></tr>
<tr><td><span>618</span></td><td><span>ΛΟΓΟΘΕΡΑΠΕΙΑΣ (ΠΑΤΡΑ)</span></td><td><span>ΤΕΙ ΔΥΤ ΕΛΛΑΔΑΣ</span></td><td><span>ΕΠΑΛ Α ΕΙΔ. ΠΕΡ. ΚΟΙΝ.ΚΡΙΤΗΡΙΑ  (ΗΜ) - Ββ</span></td><td><span>1</span></td><td><span>1</span></td><td><span>1.506</span></td><td><span>365</span></td><td></td><td><span>1.506</span></td><td><span>365</span></td><td></td></tr>
<tr><td><span>655</span></td><td><span>ΜΑΙΕΥΤΙΚΗΣ (ΑΘΗΝΑ)</span></td><td><span>ΤΕΙ ΑΘΗΝΑΣ</span></td><td><span>ΕΠΑΛ Α ΓΕΝΙΚΗ ΣΕΙΡΑ ΗΜΕΡΗΣΙΑ</span></td><td><span>20</span></td><td><span>20</span></td><td><span>1.923</span></td><td><span>393</span></td><td></td><td><span>1.767</span></td><td><span>384</span></td><td></td></tr>
<tr><td><span>655</span></td><td><span>ΜΑΙΕΥΤΙΚΗΣ (ΑΘΗΝΑ)</span></td><td><span>ΤΕΙ ΑΘΗΝΑΣ</span></td><td><span>ΕΠΑΛ Α ΕΙΔ. ΠΕΡ. ΠΟΛΥΤΕΚΝΟΙ (ΗΜ) - Ββ</span></td><td><span>2</span></td><td><span>2</span></td><td><span>1.586</span></td><td><span>367</span></td><td></td><td><span>1.567</span></td><td><span>377</span></td><td></td></tr>
<tr><td><span>655</span></td><td><span>ΜΑΙΕΥΤΙΚΗΣ (ΑΘΗΝΑ)</span></td><td><span>ΤΕΙ ΑΘΗΝΑΣ</span></td><td><span>ΕΠΑΛ Α ΕΙΔ. ΠΕΡ. ΤΡΙΤΕΚΝΟΙ (ΗΜ) - Ββ</span></td><td><span>1</span></td><td><span>1</span></td><td><span>1.710</span></td><td><span>381</span></td><td></td><td><span>1.710</span></td><td><span>381</span></td><td></td></tr>
<tr><td><span>655</span></td><td><span>ΜΑΙΕΥΤΙΚΗΣ (ΑΘΗΝΑ)</span></td><td><span>ΤΕΙ ΑΘΗΝΑΣ</span></td><td><span>ΕΠΑΛ Α ΕΙΔ. ΠΕΡ. ΚΟΙΝ.ΚΡΙΤΗΡΙΑ  (ΗΜ) - Ββ</span></td><td><span>1</span></td><td><span>1</span></td><td><span>1.718</span></td><td><span>343</span></td><td></td><td><span>1.718</span></td><td><span>343</span></td><td></td></tr>
<tr><td><span>657</span></td><td><span>ΜΑΙΕΥΤΙΚΗΣ (ΘΕΣΣΑΛΟΝΙΚΗ)</span></td><td><span>ΤΕΙ ΘΕΣ/ΚΗΣ</span></td><td><span>ΕΠΑΛ Α ΓΕΝΙΚΗ ΣΕΙΡΑ ΗΜΕΡΗΣΙΑ</span></td><td><span>16</span></td><td><span>16</span></td><td><span>1.937</span></td><td><span>399</span></td><td></td><td><span>1.721</span></td><td><span>367</span></td><td></td></tr>
<tr><td><span>657</span></td><td><span>ΜΑΙΕΥΤΙΚΗΣ (ΘΕΣΣΑΛΟΝΙΚΗ)</span></td><td><span>ΤΕΙ ΘΕΣ/ΚΗΣ</span></td><td><span>ΕΠΑΛ Α ΕΙΔ. ΠΕΡ. ΠΟΛΥΤΕΚΝΟΙ (ΗΜ) - Ββ</span></td><td><span>1</span></td><td><span>1</span></td><td><span>1.644</span></td><td><span>332</span></td><td></td><td><span>1.644</span></td><td><span>332</span></td><td></td></tr>
<tr><td><span>657</span></td><td><span>ΜΑΙΕΥΤΙΚΗΣ (ΘΕΣΣΑΛΟΝΙΚΗ)</span></td><td><span>ΤΕΙ ΘΕΣ/ΚΗΣ</span></td><td><span>ΕΠΑΛ Α ΕΙΔ. ΠΕΡ. ΤΡΙΤΕΚΝΟΙ (ΗΜ) - Ββ</span></td><td><span>1</span></td><td><span>1</span></td><td><span>1.713</span></td><td><span>383</span></td><td></td><td><span>1.713</span></td><td><span>383</span></td><td></td></tr>
<tr><td><span>657</span></td><td><span>ΜΑΙΕΥΤΙΚΗΣ (ΘΕΣΣΑΛΟΝΙΚΗ)</span></td><td><span>ΤΕΙ ΘΕΣ/ΚΗΣ</span></td><td><span>ΕΠΑΛ Α ΕΙΔ. ΠΕΡ. ΚΟΙΝ.ΚΡΙΤΗΡΙΑ  (ΗΜ) - Ββ</span></td><td><span>1</span></td><td><span>1</span></td><td><span>1.719</span></td><td><span>366</span></td><td></td><td><span>1.719</span></td><td><span>366</span></td><td></td></tr>
<tr><td><span>662</span></td><td><span>ΜΑΙΕΥΤΙΚΗΣ (ΠΤΟΛΕΜΑΪΔΑ)</span></td><td><span>ΤΕΙ ΔΥΤ ΜΑΚ/ΝΙΑΣ</span></td><td><span>ΕΠΑΛ Α ΓΕΝΙΚΗ ΣΕΙΡΑ ΗΜΕΡΗΣΙΑ</span></td><td><span>20</span></td><td><span>20</span></td><td><span>1.836</span></td><td><span>372</span></td><td></td><td><span>1.518</span></td><td><span>308</span></td><td></td></tr>
<tr><td><span>662</span></td><td><span>ΜΑΙΕΥΤΙΚΗΣ (ΠΤΟΛΕΜΑΪΔΑ)</span></td><td><span>ΤΕΙ ΔΥΤ ΜΑΚ/ΝΙΑΣ</span></td><td><span>ΕΠΑΛ Α ΕΙΔ. ΠΕΡ. ΠΟΛΥΤΕΚΝΟΙ (ΗΜ) - Ββ</span></td><td><span>2</span></td><td><span>2</span></td><td><span>1.498</span></td><td><span>316</span></td><td></td><td><span>1.493</span></td><td><span>327</span></td><td></td></tr>
<tr><td><span>662</span></td><td><span>ΜΑΙΕΥΤΙΚΗΣ (ΠΤΟΛΕΜΑΪΔΑ)</span></td><td><span>ΤΕΙ ΔΥΤ ΜΑΚ/ΝΙΑΣ</span></td><td><span>ΕΠΑΛ Α ΕΙΔ. ΠΕΡ. ΤΡΙΤΕΚΝΟΙ (ΗΜ) - Ββ</span></td><td><span>1</span></td><td><span>1</span></td><td><span>1.516</span></td><td><span>338</span></td><td></td><td><span>1.516</span></td><td><span>338</span></td><td></td></tr>
<tr><td><span>662</span></td><td><span>ΜΑΙΕΥΤΙΚΗΣ (ΠΤΟΛΕΜΑΪΔΑ)</span></td><td><span>ΤΕΙ ΔΥΤ ΜΑΚ/ΝΙΑΣ</span></td><td><span>ΕΠΑΛ Α ΕΙΔ. ΠΕΡ. ΚΟΙΝ.ΚΡΙΤΗΡΙΑ  (ΗΜ) - Ββ</span></td><td><span>1</span></td><td><span>1</span></td><td><span>1.492</span></td><td><span>323</span></td><td></td><td><span>1.492</span></td><td><span>323</span></td><td></td></tr>
<tr><td><span>653</span></td><td><span>ΝΟΣΗΛΕΥΤΙΚΗΣ (ΗΡΑΚΛΕΙΟ)</span></td><td><span>ΤΕΙ ΚΡΗΤΗΣ</span></td><td><span>ΕΠΑΛ Α ΓΕΝΙΚΗ ΣΕΙΡΑ ΗΜΕΡΗΣΙΑ</span></td><td><span>24</span></td><td><span>24</span></td><td><span>1.869</span></td><td><span>381</span></td><td></td><td><span>1.468</span></td><td><span>364</span></td><td></td></tr>
<tr><td><span>653</span></td><td><span>ΝΟΣΗΛΕΥΤΙΚΗΣ (ΗΡΑΚΛΕΙΟ)</span></td><td><span>ΤΕΙ ΚΡΗΤΗΣ</span></td><td><span>ΕΠΑΛ Α ΕΙΔ. ΠΕΡ. ΠΟΛΥΤΕΚΝΟΙ (ΗΜ) - Ββ</span></td><td><span>2</span></td><td><span>2</span></td><td><span>1.401</span></td><td><span>332</span></td><td></td><td><span>1.378</span></td><td><span>280</span></td><td></td></tr>
<tr><td><span>653</span></td><td><span>ΝΟΣΗΛΕΥΤΙΚΗΣ (ΗΡΑΚΛΕΙΟ)</span></td><td><span>ΤΕΙ ΚΡΗΤΗΣ</span></td><td><span>ΕΠΑΛ Α ΕΙΔ. ΠΕΡ. ΤΡΙΤΕΚΝΟΙ (ΗΜ) - Ββ</span></td><td><span>1</span></td><td><span>1</span></td><td><span>1.463</span></td><td><span>355</span></td><td></td><td><span>1.463</span></td><td><span>355</span></td><td></td></tr>
<tr><td><span>653</span></td><td><span>ΝΟΣΗΛΕΥΤΙΚΗΣ (ΗΡΑΚΛΕΙΟ)</span></td><td><span>ΤΕΙ ΚΡΗΤΗΣ</span></td><td><span>ΕΠΑΛ Α ΕΙΔ. ΠΕΡ. ΚΟΙΝ.ΚΡΙΤΗΡΙΑ  (ΗΜ) - Ββ</span></td><td><span>2</span></td><td><span>2</span></td><td><span>1.459</span></td><td><span>334</span></td><td></td><td><span>1.443</span></td><td><span>326</span></td><td></td></tr>
<tr><td><span>645</span></td><td><span>ΝΟΣΗΛΕΥΤΙΚΗΣ (ΑΘΗΝΑ)</span></td><td><span>ΤΕΙ ΑΘΗΝΑΣ</span></td><td><span>ΕΠΑΛ Α ΓΕΝΙΚΗ ΣΕΙΡΑ ΗΜΕΡΗΣΙΑ</span></td><td><span>36</span></td><td><span>36</span></td><td><span>1.899</span></td><td><span>393</span></td><td></td><td><span>1.645</span></td><td><span>394</span></td><td></td></tr>
<tr><td><span>645</span></td><td><span>ΝΟΣΗΛΕΥΤΙΚΗΣ (ΑΘΗΝΑ)</span></td><td><span>ΤΕΙ ΑΘΗΝΑΣ</span></td><td><span>ΕΠΑΛ Α ΕΙΔ. ΠΕΡ. ΠΟΛΥΤΕΚΝΟΙ (ΗΜ) - Ββ</span></td><td><span>3</span></td><td><span>3</span></td><td><span>1.578</span></td><td><span>335</span></td><td></td><td><span>1.544</span></td><td><span>385</span></td><td></td></tr>
<tr><td><span>645</span></td><td><span>ΝΟΣΗΛΕΥΤΙΚΗΣ (ΑΘΗΝΑ)</span></td><td><span>ΤΕΙ ΑΘΗΝΑΣ</span></td><td><span>ΕΠΑΛ Α ΕΙΔ. ΠΕΡ. ΤΡΙΤΕΚΝΟΙ (ΗΜ) - Ββ</span></td><td><span>2</span></td><td><span>2</span></td><td><span>1.624</span></td><td><span>337</span></td><td></td><td><span>1.613</span></td><td><span>355</span></td><td></td></tr>
<tr><td><span>645</span></td><td><span>ΝΟΣΗΛΕΥΤΙΚΗΣ (ΑΘΗΝΑ)</span></td><td><span>ΤΕΙ ΑΘΗΝΑΣ</span></td><td><span>ΕΠΑΛ Α ΕΙΔ. ΠΕΡ. ΚΟΙΝ.ΚΡΙΤΗΡΙΑ  (ΗΜ) - Ββ</span></td><td><span>2</span></td><td><span>2</span></td><td><span>1.611</span></td><td><span>359</span></td><td></td><td><span>1.604</span></td><td><span>345</span></td><td></td></tr>
<tr><td><span>654</span></td><td><span>ΝΟΣΗΛΕΥΤΙΚΗΣ (ΙΩΑΝΝΙΝΑ)</span></td><td><span>ΤΕΙ ΗΠΕΙΡΟΥ</span></td><td><span>ΕΠΑΛ Α ΓΕΝΙΚΗ ΣΕΙΡΑ ΗΜΕΡΗΣΙΑ</span></td><td><span>20</span></td><td><span>20</span></td><td><span>1.904</span></td><td><span>394</span></td><td></td><td><span>1.543</span></td><td><span>346</span></td><td></td></tr>
<tr><td><span>654</span></td><td><span>ΝΟΣΗΛΕΥΤΙΚΗΣ (ΙΩΑΝΝΙΝΑ)</span></td><td><span>ΤΕΙ ΗΠΕΙΡΟΥ</span></td><td><span>ΕΠΑΛ Α ΕΙΔ. ΠΕΡ. ΠΟΛΥΤΕΚΝΟΙ (ΗΜ) - Ββ</span></td><td><span>2</span></td><td><span>2</span></td><td><span>1.512</span></td><td><span>324</span></td><td></td><td><span>1.455</span></td><td><span>347</span></td><td></td></tr>
<tr><td><span>654</span></td><td><span>ΝΟΣΗΛΕΥΤΙΚΗΣ (ΙΩΑΝΝΙΝΑ)</span></td><td><span>ΤΕΙ ΗΠΕΙΡΟΥ</span></td><td><span>ΕΠΑΛ Α ΕΙΔ. ΠΕΡ. ΤΡΙΤΕΚΝΟΙ (ΗΜ) - Ββ</span></td><td><span>1</span></td><td><span>1</span></td><td><span>1.510</span></td><td><span>376</span></td><td></td><td><span>1.510</span></td><td><span>376</span></td><td></td></tr>
<tr><td><span>654</span></td><td><span>ΝΟΣΗΛΕΥΤΙΚΗΣ (ΙΩΑΝΝΙΝΑ)</span></td><td><span>ΤΕΙ ΗΠΕΙΡΟΥ</span></td><td><span>ΕΠΑΛ Α ΕΙΔ. ΠΕΡ. ΚΟΙΝ.ΚΡΙΤΗΡΙΑ  (ΗΜ) - Ββ</span></td><td><span>1</span></td><td><span>1</span></td><td><span>1.501</span></td><td><span>350</span></td><td></td><td><span>1.501</span></td><td><span>350</span></td><td></td></tr>
<tr><td><span>647</span></td><td><span>ΝΟΣΗΛΕΥΤΙΚΗΣ (ΘΕΣΣΑΛΟΝΙΚΗ)</span></td><td><span>ΤΕΙ ΘΕΣ/ΚΗΣ</span></td><td><span>ΕΠΑΛ Α ΓΕΝΙΚΗ ΣΕΙΡΑ ΗΜΕΡΗΣΙΑ</span></td><td><span>20</span></td><td><span>20</span></td><td><span>1.955</span></td><td><span>400</span></td><td></td><td><span>1.631</span></td><td><span>343</span></td><td></td></tr>
<tr><td><span>647</span></td><td><span>ΝΟΣΗΛΕΥΤΙΚΗΣ (ΘΕΣΣΑΛΟΝΙΚΗ)</span></td><td><span>ΤΕΙ ΘΕΣ/ΚΗΣ</span></td><td><span>ΕΠΑΛ Α ΕΙΔ. ΠΕΡ. ΠΟΛΥΤΕΚΝΟΙ (ΗΜ) - Ββ</span></td><td><span>2</span></td><td><span>2</span></td><td><span>1.626</span></td><td><span>368</span></td><td></td><td><span>1.599</span></td><td><span>348</span></td><td></td></tr>
<tr><td><span>647</span></td><td><span>ΝΟΣΗΛΕΥΤΙΚΗΣ (ΘΕΣΣΑΛΟΝΙΚΗ)</span></td><td><span>ΤΕΙ ΘΕΣ/ΚΗΣ</span></td><td><span>ΕΠΑΛ Α ΕΙΔ. ΠΕΡ. ΤΡΙΤΕΚΝΟΙ (ΗΜ) - Ββ</span></td><td><span>1</span></td><td><span>1</span></td><td><span>1.621</span></td><td><span>347</span></td><td></td><td><span>1.621</span></td><td><span>347</span></td><td></td></tr>
<tr><td><span>647</span></td><td><span>ΝΟΣΗΛΕΥΤΙΚΗΣ (ΘΕΣΣΑΛΟΝΙΚΗ)</span></td><td><span>ΤΕΙ ΘΕΣ/ΚΗΣ</span></td><td><span>ΕΠΑΛ Α ΕΙΔ. ΠΕΡ. ΚΟΙΝ.ΚΡΙΤΗΡΙΑ  (ΗΜ) - Ββ</span></td><td><span>1</span></td><td><span>1</span></td><td><span>1.542</span></td><td><span>302</span></td><td></td><td><span>1.542</span></td><td><span>302</span></td><td></td></tr>
<tr><td><span>652</span></td><td><span>ΝΟΣΗΛΕΥΤΙΚΗΣ (ΛΑΜΙΑ)</span></td><td><span>ΤΕΙ  ΣΤΕΡ ΕΛΛΑΔΑΣ</span></td><td><span>ΕΠΑΛ Α ΓΕΝΙΚΗ ΣΕΙΡΑ ΗΜΕΡΗΣΙΑ</span></td><td><span>30</span></td><td><span>30</span></td><td><span>1.625</span></td><td><span>351</span></td><td></td><td><span>1.491</span></td><td><span>345</span></td><td></td></tr>
<tr><td><span>652</span></td><td><span>ΝΟΣΗΛΕΥΤΙΚΗΣ (ΛΑΜΙΑ)</span></td><td><span>ΤΕΙ  ΣΤΕΡ ΕΛΛΑΔΑΣ</span></td><td><span>ΕΠΑΛ Α ΕΙΔ. ΠΕΡ. ΠΟΛΥΤΕΚΝΟΙ (ΗΜ) - Ββ</span></td><td><span>2</span></td><td><span>2</span></td><td><span>1.424</span></td><td><span>310</span></td><td></td><td><span>1.409</span></td><td><span>324</span></td><td></td></tr>
<tr><td><span>652</span></td><td><span>ΝΟΣΗΛΕΥΤΙΚΗΣ (ΛΑΜΙΑ)</span></td><td><span>ΤΕΙ  ΣΤΕΡ ΕΛΛΑΔΑΣ</span></td><td><span>ΕΠΑΛ Α ΕΙΔ. ΠΕΡ. ΤΡΙΤΕΚΝΟΙ (ΗΜ) - Ββ</span></td><td><span>2</span></td><td><span>2</span></td><td><span>1.485</span></td><td><span>333</span></td><td></td><td><span>1.478</span></td><td><span>328</span></td><td></td></tr>
<tr><td><span>652</span></td><td><span>ΝΟΣΗΛΕΥΤΙΚΗΣ (ΛΑΜΙΑ)</span></td><td><span>ΤΕΙ  ΣΤΕΡ ΕΛΛΑΔΑΣ</span></td><td><span>ΕΠΑΛ Α ΕΙΔ. ΠΕΡ. ΚΟΙΝ.ΚΡΙΤΗΡΙΑ  (ΗΜ) - Ββ</span></td><td><span>2</span></td><td><span>2</span></td><td><span>1.475</span></td><td><span>357</span></td><td></td><td><span>1.462</span></td><td><span>314</span></td><td></td></tr>
<tr><td><span>651</span></td><td><span>ΝΟΣΗΛΕΥΤΙΚΗΣ (ΛΑΡΙΣΑ)</span></td><td><span>ΤΕΙ ΘΕΣΣΑΛΙΑΣ</span></td><td><span>ΕΠΑΛ Α ΓΕΝΙΚΗ ΣΕΙΡΑ ΗΜΕΡΗΣΙΑ</span></td><td><span>27</span></td><td><span>27</span></td><td><span>1.822</span></td><td><span>383</span></td><td></td><td><span>1.538</span></td><td><span>300</span></td><td></td></tr>
<tr><td><span>651</span></td><td><span>ΝΟΣΗΛΕΥΤΙΚΗΣ (ΛΑΡΙΣΑ)</span></td><td><span>ΤΕΙ ΘΕΣΣΑΛΙΑΣ</span></td><td><span>ΕΠΑΛ Α ΕΙΔ. ΠΕΡ. ΠΟΛΥΤΕΚΝΟΙ (ΗΜ) - Ββ</span></td><td><span>2</span></td><td><span>2</span></td><td><span>1.517</span></td><td><span>330</span></td><td></td><td><span>1.459</span></td><td><span>364</span></td><td></td></tr>
<tr><td><span>651</span></td><td><span>ΝΟΣΗΛΕΥΤΙΚΗΣ (ΛΑΡΙΣΑ)</span></td><td><span>ΤΕΙ ΘΕΣΣΑΛΙΑΣ</span></td><td><span>ΕΠΑΛ Α ΕΙΔ. ΠΕΡ. ΤΡΙΤΕΚΝΟΙ (ΗΜ) - Ββ</span></td><td><span>2</span></td><td><span>2</span></td><td><span>1.523</span></td><td><span>393</span></td><td></td><td><span>1.514</span></td><td><span>343</span></td><td></td></tr>
<tr><td><span>651</span></td><td><span>ΝΟΣΗΛΕΥΤΙΚΗΣ (ΛΑΡΙΣΑ)</span></td><td><span>ΤΕΙ ΘΕΣΣΑΛΙΑΣ</span></td><td><span>ΕΠΑΛ Α ΕΙΔ. ΠΕΡ. ΚΟΙΝ.ΚΡΙΤΗΡΙΑ  (ΗΜ) - Ββ</span></td><td><span>2</span></td><td><span>2</span></td><td><span>1.482</span></td><td><span>329</span></td><td></td><td><span>1.475</span></td><td><span>319</span></td><td></td></tr>
<tr><td><span>649</span></td><td><span>ΝΟΣΗΛΕΥΤΙΚΗΣ (ΠΑΤΡΑ)</span></td><td><span>ΤΕΙ ΔΥΤ ΕΛΛΑΔΑΣ</span></td><td><span>ΕΠΑΛ Α ΓΕΝΙΚΗ ΣΕΙΡΑ ΗΜΕΡΗΣΙΑ</span></td><td><span>30</span></td><td><span>30</span></td><td><span>1.847</span></td><td><span>400</span></td><td></td><td><span>1.541</span></td><td><span>364</span></td><td></td></tr>
<tr><td><span>649</span></td><td><span>ΝΟΣΗΛΕΥΤΙΚΗΣ (ΠΑΤΡΑ)</span></td><td><span>ΤΕΙ ΔΥΤ ΕΛΛΑΔΑΣ</span></td><td><span>ΕΠΑΛ Α ΕΙΔ. ΠΕΡ. ΠΟΛΥΤΕΚΝΟΙ (ΗΜ) - Ββ</span></td><td><span>2</span></td><td><span>2</span></td><td><span>1.527</span></td><td><span>363</span></td><td></td><td><span>1.453</span></td><td><span>338</span></td><td></td></tr>
<tr><td><span>649</span></td><td><span>ΝΟΣΗΛΕΥΤΙΚΗΣ (ΠΑΤΡΑ)</span></td><td><span>ΤΕΙ ΔΥΤ ΕΛΛΑΔΑΣ</span></td><td><span>ΕΠΑΛ Α ΕΙΔ. ΠΕΡ. ΤΡΙΤΕΚΝΟΙ (ΗΜ) - Ββ</span></td><td><span>2</span></td><td><span>2</span></td><td><span>1.506</span></td><td><span>338</span></td><td></td><td><span>1.505</span></td><td><span>366</span></td><td></td></tr>
<tr><td><span>649</span></td><td><span>ΝΟΣΗΛΕΥΤΙΚΗΣ (ΠΑΤΡΑ)</span></td><td><span>ΤΕΙ ΔΥΤ ΕΛΛΑΔΑΣ</span></td><td><span>ΕΠΑΛ Α ΕΙΔ. ΠΕΡ. ΚΟΙΝ.ΚΡΙΤΗΡΙΑ  (ΗΜ) - Ββ</span></td><td><span>2</span></td><td><span>2</span></td><td><span>1.514</span></td><td><span>304</span></td><td></td><td><span>1.490</span></td><td><span>301</span></td><td></td></tr>
<tr><td><span>744</span></td><td><span>ΝΟΣΗΛΕΥΤΙΚΗΣ (ΔΙΔΥΜΟΤΕΙΧΟ)</span></td><td><span>ΤΕΙ ΑΝΑΤ ΜΑΚ/ΝΙΑΣ</span></td><td><span>ΕΠΑΛ Α ΓΕΝΙΚΗ ΣΕΙΡΑ ΗΜΕΡΗΣΙΑ</span></td><td><span>30</span></td><td><span>30</span></td><td><span>1.902</span></td><td><span>398</span></td><td></td><td><span>1.476</span></td><td><span>362</span></td><td></td></tr>
</tbody>
</table>
</body>
</html>
```

FILE: styles.css
```css
html, body {
  margin: 0;
  padding: 0;
  background: #ffffff;
}

body {
  font-family: "Liberation Sans", Arial, sans-serif;
  color: #1a1a1a;
}

.sheet {
  border-collapse: collapse;
  table-layout: fixed;
  width: 956px;
  margin: 1px 0 0 1px;
  font-size: 10px;
}

.sheet .w0 { width: 49px; }
.sheet .w1 { width: 291px; }
.sheet .w2 { width: 80px; }
.sheet .w3 { width: 182px; }
.sheet .w4 { width: 43px; }
.sheet .w5 { width: 58px; }
.sheet .w6 { width: 58px; }
.sheet .w7 { width: 46px; }
.sheet .w8 { width: 32px; }
.sheet .w9 { width: 46px; }
.sheet .w10 { width: 37px; }
.sheet .w11 { width: 34px; }

.sheet tr {
  height: 11.85px;
}

.sheet td {
  border: 1px solid #858585;
  padding: 0;
  text-align: center;
  vertical-align: middle;
  white-space: pre;
  line-height: 9px;
  overflow: visible;
}

.sheet td span {
  display: inline-block;
  transform: scaleX(0.78);
  transform-origin: 50% 50%;
}

.sheet td:nth-child(2),
.sheet td:nth-child(3),
.sheet td:nth-child(4) {
  text-align: left;
  padding-left: 2px;
}

.sheet td:nth-child(2) span,
.sheet td:nth-child(3) span,
.sheet td:nth-child(4) span {
  transform-origin: 0 50%;
}

.sheet td:nth-child(5),
.sheet td:nth-child(6),
.sheet td:nth-child(7),
.sheet td:nth-child(10) {
  font-weight: bold;
}

.sheet td:nth-child(5) { padding-right: 12px; }
.sheet td:nth-child(6) { padding-left: 10px; }
.sheet td:nth-child(8) { padding-right: 8px; }
.sheet td:nth-child(11) { padding-right: 6px; }
```
